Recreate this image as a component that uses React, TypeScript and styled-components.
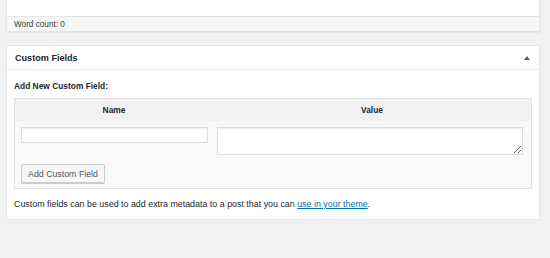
import React from 'react';
import styled, {createGlobalStyle} from 'styled-components';

const GlobalStyle = createGlobalStyle`
html, body {
  margin: 0;
  padding: 0;
  background: #f1f1f1;
  font-family: "Liberation Sans", Arial, sans-serif;
  color: #23282d;
}
`;

const Page = styled.div`
  width: 534px;
  padding-left: 6px;
  display: flex;
  flex-direction: column;
`;

const EditorBox = styled.div`
  background: #fff;
  border: 1px solid #e5e5e5;
  border-top: none;
  box-shadow: 0 1px 1px rgba(0,0,0,.04);
`;

const EditorArea = styled.div`
  height: 16px;
`;

const StatusBar = styled.div`
  background: #f7f7f7;
  border-top: 1px solid #e5e5e5;
  height: 14px;
  display: flex;
  align-items: center;
  padding-left: 7px;
  font-size: 8.2px;
  color: #32373c;
`;

const PostBox = styled.div`
  margin-top: 13px;
  background: #fff;
  border: 1px solid #e5e5e5;
  box-shadow: 0 1px 1px rgba(0,0,0,.04);
`;

const BoxHeader = styled.div`
  height: 23px;
  border-bottom: 1px solid #eee;
  display: flex;
  align-items: center;
  justify-content: space-between;
  padding: 0 9px 0 8px;
`;

const BoxTitle = styled.h2`
  margin: 0;
  font-size: 9.1px;
  font-weight: bold;
  color: #23282d;
`;

const Inside = styled.div`
  padding: 10px 7px 9px 7px;
`;

const Label = styled.div`
  font-size: 8.4px;
  font-weight: bold;
  line-height: 12px;
  margin-bottom: 6px;
`;

const FieldTable = styled.div`
  border: 1px solid #e1e1e1;
  background: #f9f9f9;
`;

const HeadRow = styled.div`
  display: grid;
  grid-template-columns: 198px 1fr;
  background: #f1f1f1;
  height: 22px;
  align-items: center;
`;

const HeadCell = styled.div`
  text-align: center;
  font-size: 8.4px;
  font-weight: bold;
  color: #23282d;
`;

const BodyRow = styled.div`
  display: grid;
  grid-template-columns: 198px 1fr;
  padding-top: 6px;
  align-items: start;
`;

const Cell = styled.div<{pad: string}>`
  padding: ${p => p.pad};
  line-height: 0;
`;

const TextInput = styled.input`
  box-sizing: border-box;
  display: block;
  width: 100%;
  height: 16px;
  margin: 0;
  border: 1px solid #ddd;
  box-shadow: inset 0 1px 2px rgba(0,0,0,.07);
  background: #fff;
  outline: none;
`;

const TextArea = styled.textarea`
  box-sizing: border-box;
  display: block;
  width: 100%;
  height: 28px;
  margin: 0;
  border: 1px solid #ddd;
  box-shadow: inset 0 1px 2px rgba(0,0,0,.07);
  background: #fff;
  outline: none;
  resize: vertical;
`;

const ButtonRow = styled.div`
  padding: 9px 6px 5px 6px;
  line-height: 0;
`;

const Button = styled.button`
  height: 19px;
  width: 84px;
  padding: 0;
  background: #f7f7f7;
  border: 1px solid #ccc;
  border-radius: 2px;
  box-shadow: 0 1px 0 #ccc;
  color: #555;
  font-family: "Liberation Sans", Arial, sans-serif;
  font-size: 8.8px;
`;

const Description = styled.p`
  margin: 9px 0 0 0;
  font-size: 8.9px;
  line-height: 12px;
  color: #23282d;

  a {
    color: #0073aa;
    text-decoration: underline;
  }
`;

const App: React.FC = () => {
  return (
    <Page>
      <GlobalStyle />
      <EditorBox>
        <EditorArea />
        <StatusBar>Word count: 0</StatusBar>
      </EditorBox>
      <PostBox>
        <BoxHeader>
          <BoxTitle>Custom Fields</BoxTitle>
          <svg width="6" height="4" viewBox="0 0 6 4">
            <path d="M0 4 L3 0 L6 4 Z" fill="#555d66" />
          </svg>
        </BoxHeader>
        <Inside>
          <Label>Add New Custom Field:</Label>
          <FieldTable>
            <HeadRow>
              <HeadCell>Name</HeadCell>
              <HeadCell>Value</HeadCell>
            </HeadRow>
            <BodyRow>
              <Cell pad="0 5px 0 6px"><TextInput type="text" /></Cell>
              <Cell pad="0 8px 0 4px"><TextArea /></Cell>
            </BodyRow>
            <ButtonRow>
              <Button>Add Custom Field</Button>
            </ButtonRow>
          </FieldTable>
          <Description>
            Custom fields can be used to add extra metadata to a post that you can <a href="#">use in your theme</a>.
          </Description>
        </Inside>
      </PostBox>
    </Page>
  );
};

export default App;
